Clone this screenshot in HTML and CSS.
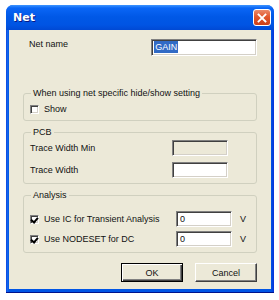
FILE: index.html
```html
<!DOCTYPE html>
<html lang="en">

<head>
    <meta charset="UTF-8">
    <title>Net</title>
    <link rel="stylesheet" href="styles.css">
</head>

<body>
    <div class="window">
        <div class="titlebar">
            <span class="title">Net</span>
            <button class="close-btn" aria-label="Close">
                <svg width="10" height="10" viewBox="0 0 10 10">
                    <path d="M1.5 1.5 L8.5 8.5 M8.5 1.5 L1.5 8.5" stroke="#fff" stroke-width="1.8" stroke-linecap="square" />
                </svg>
            </button>
        </div>

        <div class="content">
            <div class="name-row">
                <label class="name-label">Net name</label>
                <div class="edit name-edit"><span class="selected">GAIN</span></div>
            </div>

            <fieldset class="group group-show">
                <legend>When using net specific hide/show setting</legend>
                <div class="check-row">
                    <span class="check"></span>
                    <span>Show</span>
                </div>
            </fieldset>

            <fieldset class="group group-pcb">
                <legend>PCB</legend>
                <div class="field-row">
                    <span>Trace Width Min</span>
                    <div class="edit small-edit disabled"></div>
                </div>
                <div class="field-row">
                    <span>Trace Width</span>
                    <div class="edit small-edit"></div>
                </div>
            </fieldset>

            <fieldset class="group group-analysis">
                <legend>Analysis</legend>
                <div class="field-row">
                    <div class="check-row">
                        <span class="check checked"></span>
                        <span>Use IC for Transient Analysis</span>
                    </div>
                    <div class="value">
                        <div class="edit small-edit">0</div>
                        <span class="unit">V</span>
                    </div>
                </div>
                <div class="field-row">
                    <div class="check-row">
                        <span class="check checked"></span>
                        <span>Use NODESET for DC</span>
                    </div>
                    <div class="value">
                        <div class="edit small-edit">0</div>
                        <span class="unit">V</span>
                    </div>
                </div>
            </fieldset>

            <div class="buttons">
                <button class="btn default">OK</button>
                <button class="btn">Cancel</button>
            </div>
        </div>
    </div>
</body>

</html>
```

FILE: styles.css
```css
body {
    margin: 0;
    padding: 5px 0 0 6px;
    background: #fff;
    font-family: "Liberation Sans", Arial, sans-serif;
    font-size: 9px;
    color: #111;
}

.window {
    width: 268px;
    height: 288px;
    box-sizing: border-box;
    padding: 0 3px 3px 3px;
    border-radius: 7px 7px 0 0;
    background: linear-gradient(to right, #0831d9 0, #166aee 1px, #0055e5 3px, #0055e5 265px, #0831d9 268px);
    border-bottom: 1px solid #00138c;
}

.titlebar {
    height: 25px;
    display: flex;
    align-items: center;
    justify-content: space-between;
    margin: 0 -3px;
    padding: 0 3px 0 7px;
    border-radius: 7px 7px 0 0;
    background: linear-gradient(to bottom, #3d95ff 0, #0a66f6 3px, #0058e6 12px, #0054e3 20px, #0049d4 25px);
}

.title {
    color: #fff;
    font-family: "DejaVu Sans", sans-serif;
    font-weight: bold;
    font-size: 11px;
    text-shadow: 1px 1px 0 #0a1883;
}

.close-btn {
    width: 18px;
    height: 17px;
    padding: 0;
    display: flex;
    align-items: center;
    justify-content: center;
    border: 1px solid #fff;
    border-radius: 3px;
    background: linear-gradient(to bottom, #ea8a6b 0, #e2572d 45%, #cd3f17 100%);
}

.content {
    height: 259px;
    background: #ece9d8;
    display: flex;
    flex-direction: column;
    padding: 0 14px;
}

.name-row {
    display: flex;
    margin-top: 9px;
    height: 17px;
}

.name-label {
    width: 126px;
    padding-left: 6px;
    line-height: 12px;
    margin-top: -1px;
}

.edit {
    box-sizing: border-box;
    height: 16px;
    background: #fff;
    border-top: 1px solid #808080;
    border-left: 1px solid #808080;
    border-right: 1px solid #fff;
    border-bottom: 1px solid #fff;
    box-shadow: inset 1px 1px 0 #404040, inset -1px -1px 0 #d4d0c8;
    padding: 1px 3px;
    line-height: 12px;
}

.name-edit {
    width: 109px;
    height: 17px;
    padding: 1px 2px;
}

.selected {
    background: #316ac5;
    color: #fff;
    display: inline-block;
    padding: 0 1px;
}

.small-edit {
    width: 56px;
}

.disabled {
    background: #ece9d8;
}

.group {
    margin: 0;
    padding: 0 0 0 6px;
    border: 1px solid #d0d0bf;
    border-radius: 3px;
    min-width: 0;
}

.group legend {
    padding: 0 2px;
    margin-left: 1px;
    line-height: 12px;
}

.group-show {
    margin-top: 31px;
    padding-top: 3px;
    padding-bottom: 4px;
}

.check-row {
    display: flex;
    align-items: center;
    height: 14px;
    gap: 5px;
}

.check {
    width: 9px;
    height: 9px;
    box-sizing: border-box;
    background: #fff;
    border-top: 1px solid #808080;
    border-left: 1px solid #808080;
    border-right: 1px solid #fff;
    border-bottom: 1px solid #fff;
    box-shadow: inset 1px 1px 0 #404040, inset -1px -1px 0 #d4d0c8;
    position: relative;
}

.checked::after {
    content: "";
    position: absolute;
    left: 1px;
    top: 0px;
    width: 3px;
    height: 5px;
    border-right: 2px solid #000;
    border-bottom: 2px solid #000;
    transform: rotate(40deg);
}

.group-pcb {
    margin-top: 5px;
    padding-top: 2px;
    padding-bottom: 5px;
    display: flex;
    flex-direction: column;
    gap: 6px;
}

.field-row {
    display: flex;
    align-items: center;
    justify-content: space-between;
    padding-right: 28px;
}

.group-analysis {
    margin-top: 5px;
    padding-top: 10px;
    padding-bottom: 5px;
    display: flex;
    flex-direction: column;
    gap: 4px;
}

.group-analysis .field-row {
    padding-right: 0;
}

.value {
    display: flex;
    align-items: center;
    width: 80px;
    gap: 8px;
}

.unit {
    line-height: 12px;
}

.buttons {
    display: flex;
    justify-content: flex-end;
    gap: 12px;
    margin-top: 10px;
}

.btn {
    width: 62px;
    height: 19px;
    padding: 0;
    font-family: "Liberation Sans", Arial, sans-serif;
    font-size: 9px;
    color: #111;
    background: #ece9d8;
    border-top: 1px solid #fff;
    border-left: 1px solid #fff;
    border-right: 1px solid #404040;
    border-bottom: 1px solid #404040;
    box-shadow: inset -1px -1px 0 #808080;
}

.btn.default {
    border: 1px solid #000;
    box-shadow: inset 1px 1px 0 #fff, inset -1px -1px 0 #404040, inset -2px -2px 0 #808080;
}
```
